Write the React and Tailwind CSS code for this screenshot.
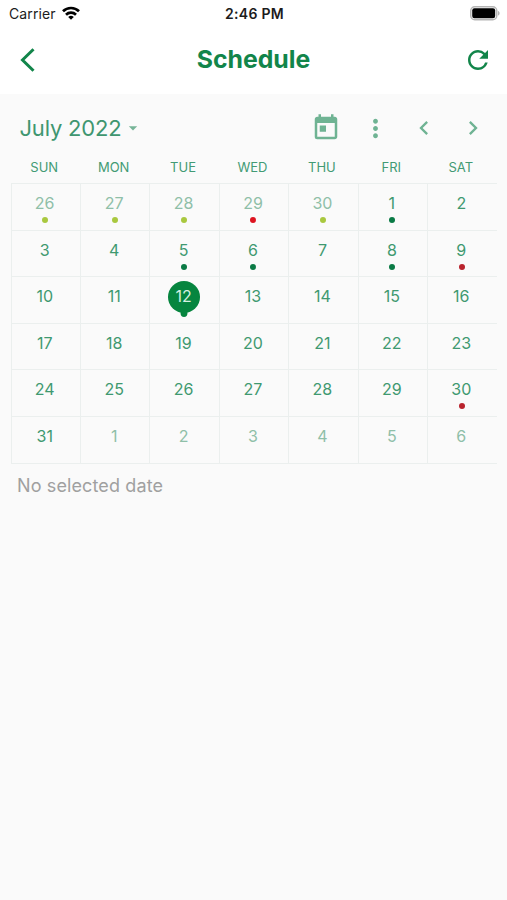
import { MdArrowDropDown, MdChevronLeft, MdChevronRight, MdMoreVert, MdRefresh, MdToday } from "react-icons/md";
import clsx from "clsx";

const weekDays = ["SUN", "MON", "TUE", "WED", "THU", "FRI", "SAT"];

// Date -> dot colour
const events = {
  "6-26": "bg-[#a9c83f]",
  "6-27": "bg-[#a9c83f]",
  "6-28": "bg-[#a9c83f]",
  "6-29": "bg-[#dd1420]",
  "6-30": "bg-[#a9c83f]",
  "7-1": "bg-[#0a7a45]",
  "7-5": "bg-[#0a7a45]",
  "7-6": "bg-[#0a7a45]",
  "7-8": "bg-[#0a7a45]",
  "7-9": "bg-[#b9232d]",
  "7-30": "bg-[#b9232d]",
};

const days = Array.from({ length: 42 }, (_, i) => {
  const d = new Date(2022, 5, 26 + i);
  return { month: d.getMonth() + 1, day: d.getDate() };
});

const StatusBar = () => (
  <div className="grid h-[27px] grid-cols-3 items-center pl-[9px] pr-[7px] text-[14px] text-[#1c1c1c]">
    <div className="flex items-center gap-[6px]">
      <span className="tracking-[0.1px]">Carrier</span>
      <svg className="mb-[2px]" width="18" height="14" viewBox="0 0 18 14" fill="none" stroke="#000" strokeWidth="2.7">
        <path d="M1 5.300a11.400 11.400 0 0 1 16 0" />
        <path d="M4 8.700a7.200 7.200 0 0 1 10 0" />
        <path d="M9 13.800 6.200 11a4 4 0 0 1 5.600 0z" fill="#000" stroke="none" />
      </svg>
    </div>
    <span className="text-center font-semibold tracking-[0.3px]">2:46 PM</span>
    <svg className="justify-self-end" width="30" height="15" viewBox="0 0 30 15">
      <rect x="0.75" y="0.75" width="26" height="13" rx="4" fill="#fff" stroke="#b5b5b5" strokeWidth="1.5" />
      <rect x="2.2" y="2.3" width="23" height="10" rx="2.2" fill="#000" />
      <path d="M28 5v4.600c1-.4 1.600-1.200 1.600-2.300S29 5.400 28 5z" fill="#b5b5b5" />
    </svg>
  </div>
);

const DayCell = ({ month, day }) => {
  const dot = events[`${month}-${day}`];
  const selected = month === 7 && day === 12;

  return (
    <div
      className={clsx(
        "relative flex justify-center border-b border-l border-[#ebefee] pr-[2px] pt-[10px] text-[16px] leading-[18px]",
        month === 7 ? "text-[#3f9970]" : "text-[#8fbfa8]"
      )}
    >
      {selected && (
        <svg className="absolute left-[calc(50%-1px)] top-[4px] -translate-x-1/2" width="32" height="37" viewBox="0 0 32 37">
          <circle cx="16" cy="16" r="16" fill="#06853f" />
          <circle cx="16" cy="32.600" r="3.400" fill="#06853f" />
        </svg>
      )}
      <span className={clsx("relative", selected && "text-[#d6f0e1]")}>{day}</span>
      {dot && (
        <div className={clsx("absolute left-[calc(50%-0.5px)] top-[33px] size-[6px] -translate-x-1/2 rounded-full", dot)} />
      )}
    </div>
  );
};

const App = () => {
  return (
    <div className="flex h-screen flex-col overflow-hidden bg-[#fafafa] font-['Inter','Liberation_Sans',sans-serif]">
      <header className="h-[94px] bg-white">
        <StatusBar />
        <div className="grid h-[65px] grid-cols-[60px_1fr_60px] items-center text-[#12854a]">
          <svg className="ml-[20px]" width="15" height="24" viewBox="0 0 15 24" fill="none" stroke="currentColor" strokeWidth="3">
            <path d="M13.500 1.200 2.500 12l11 10.800" />
          </svg>
          <h1 className="pt-px text-center text-[24.8px] font-bold">Schedule</h1>
          <MdRefresh className="mr-[14px] justify-self-end" size={30} />
        </div>
      </header>

      {/* Month toolbar */}
      <div className="flex h-[68px] items-center pl-[19.5px] pr-[20px]">
        <span className="text-[22px] tracking-[-0.2px] text-[#3f9670]">July 2022</span>
        <MdArrowDropDown className="ml-[2px] text-[#76b497]" size={20} />
        <div className="ml-auto flex items-center text-[#6fb393]">
          <MdToday size={30} />
          <MdMoreVert className="ml-[19.500px]" size={29} />
          <MdChevronLeft className="ml-[20.500px]" size={28} />
          <MdChevronRight className="ml-[21px]" size={28} />
        </div>
      </div>

      <div className="ml-[10.5px] mr-[10.500px]">
        <div className="-ml-px mr-px grid h-[21px] grid-cols-7 text-center text-[13px] leading-[11px] text-[#429a74]">
          {weekDays.map((d) => (
            <span key={d}>{d}</span>
          ))}
        </div>
        <div className="grid auto-rows-[46.6px] grid-cols-7 border-t border-[#ebefee]">
          {days.map((d) => (
            <DayCell key={`${d.month}-${d.day}`} {...d} />
          ))}
        </div>
      </div>

      <p className="ml-[17px] mt-[8px] text-[18px] tracking-[0.12px] text-[#a0a0a0]">No selected date</p>
    </div>
  );
};

export default App;
